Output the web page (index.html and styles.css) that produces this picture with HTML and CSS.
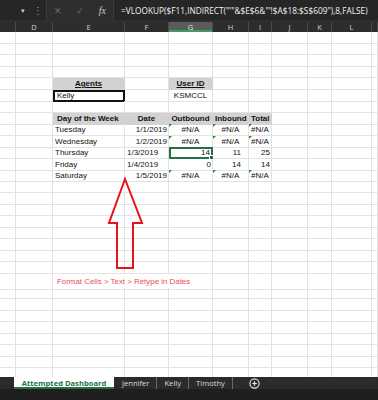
FILE: index.html
```html
<!DOCTYPE html>
<html lang="en">
<head>
    <meta charset="UTF-8">
    <meta name="viewport" content="width=device-width, initial-scale=1.0">
    <title>Attempted Dashboard</title>
    <link rel="stylesheet" href="styles.css">
</head>
<body>

<div class="app">
    <div class="fbar">
        <div class="namebox"><span class="caret">&#9662;</span></div>
        <div class="dots">&#8942;</div>
        <div class="fbtns">
            <span class="fbtn">&#10005;</span>
            <span class="fbtn">&#10003;</span>
            <span class="fbtn fx">fx</span>
        </div>
        <div class="formula">=VLOOKUP($F11,INDIRECT("'"&amp;$E$6&amp;"'!$A$18:$S$609"),8,FALSE)</div>
    </div>

    <div class="colheads">
        <div></div><div>D</div><div>E</div><div>F</div><div class="sel">G</div><div>H</div><div>I</div><div>J</div><div>K</div><div>L</div><div></div>
    </div>

    <div class="sheet">
        <div class="row"><div></div><div></div><div></div><div></div><div></div><div></div><div></div><div></div><div></div><div></div><div></div></div>
        <div class="row"><div></div><div></div><div></div><div></div><div></div><div></div><div></div><div></div><div></div><div></div><div></div></div>
        <div class="row"><div></div><div></div><div></div><div></div><div></div><div></div><div></div><div></div><div></div><div></div><div></div></div>
        <div class="row"><div></div><div></div><div></div><div></div><div></div><div></div><div></div><div></div><div></div><div></div><div></div></div>
        <div class="row"><div></div><div></div><div class="hd ul c">Agents</div><div></div><div class="hd ul c">User ID</div><div></div><div></div><div></div><div></div><div></div><div></div></div>
        <div class="row"><div></div><div></div><div class="agent">Kelly</div><div></div><div class="c">KSMCCL</div><div></div><div></div><div></div><div></div><div></div><div></div></div>
        <div class="row"><div></div><div></div><div></div><div></div><div></div><div></div><div></div><div></div><div></div><div></div><div></div></div>
        <div class="row"><div></div><div></div><div class="hd pl">Day of the Week</div><div class="hd c">Date</div><div class="hd c">Outbound</div><div class="hd c">Inbound</div><div class="hd c">Total</div><div></div><div></div><div></div><div></div></div>
        <div class="row"><div></div><div></div><div>Tuesday</div><div class="r">1/1/2019</div><div class="c err">#N/A</div><div class="c err">#N/A</div><div class="c err">#N/A</div><div></div><div></div><div></div><div></div></div>
        <div class="row"><div></div><div></div><div>Wednesday</div><div class="r">1/2/2019</div><div class="c err">#N/A</div><div class="c err">#N/A</div><div class="c err">#N/A</div><div></div><div></div><div></div><div></div></div>
        <div class="row"><div></div><div></div><div>Thursday</div><div>1/3/2019</div><div class="r active">14</div><div class="r num">11</div><div class="r">25</div><div></div><div></div><div></div><div></div></div>
        <div class="row"><div></div><div></div><div>Friday</div><div>1/4/2019</div><div class="r">0</div><div class="r num">14</div><div class="r">14</div><div></div><div></div><div></div><div></div></div>
        <div class="row"><div></div><div></div><div>Saturday</div><div class="r">1/5/2019</div><div class="c err">#N/A</div><div class="c err">#N/A</div><div class="c err">#N/A</div><div></div><div></div><div></div><div></div></div>
        <div class="row"><div></div><div></div><div></div><div></div><div></div><div></div><div></div><div></div><div></div><div></div><div></div></div>
        <div class="row"><div></div><div></div><div></div><div></div><div></div><div></div><div></div><div></div><div></div><div></div><div></div></div>
        <div class="row"><div></div><div></div><div></div><div></div><div></div><div></div><div></div><div></div><div></div><div></div><div></div></div>
        <div class="row"><div></div><div></div><div></div><div></div><div></div><div></div><div></div><div></div><div></div><div></div><div></div></div>
        <div class="row"><div></div><div></div><div></div><div></div><div></div><div></div><div></div><div></div><div></div><div></div><div></div></div>
        <div class="row"><div></div><div></div><div></div><div></div><div></div><div></div><div></div><div></div><div></div><div></div><div></div></div>
        <div class="row"><div></div><div></div><div></div><div></div><div></div><div></div><div></div><div></div><div></div><div></div><div></div></div>
        <div class="row"><div></div><div></div><div></div><div></div><div></div><div></div><div></div><div></div><div></div><div></div><div></div></div>
        <div class="row tall"><div></div><div></div><div class="note">Format Cells &gt; Text &gt; Retype in Dates</div><div></div><div></div><div></div><div></div><div></div><div></div></div>
        <div class="row"><div></div><div></div><div></div><div></div><div></div><div></div><div></div><div></div><div></div><div></div><div></div></div>
        <div class="row"><div></div><div></div><div></div><div></div><div></div><div></div><div></div><div></div><div></div><div></div><div></div></div>
        <div class="row"><div></div><div></div><div></div><div></div><div></div><div></div><div></div><div></div><div></div><div></div><div></div></div>
        <div class="row"><div></div><div></div><div></div><div></div><div></div><div></div><div></div><div></div><div></div><div></div><div></div></div>
        <div class="row"><div></div><div></div><div></div><div></div><div></div><div></div><div></div><div></div><div></div><div></div><div></div></div>
        <div class="row"><div></div><div></div><div></div><div></div><div></div><div></div><div></div><div></div><div></div><div></div><div></div></div>
        <div class="row"><div></div><div></div><div></div><div></div><div></div><div></div><div></div><div></div><div></div><div></div><div></div></div>
        <div class="row"><div></div><div></div><div></div><div></div><div></div><div></div><div></div><div></div><div></div><div></div><div></div></div>
    </div>

    <div class="tabs">
        <div class="tab active">Attempted Dashboard</div>
        <div class="tab">Jennifer</div>
        <div class="tab">Kelly</div>
        <div class="tab">Timothy</div>
        <div class="addtab">
            <svg width="11" height="11" viewBox="0 0 11 11">
                <circle cx="5.5" cy="5.5" r="4.6" fill="none" stroke="#e6e6e6" stroke-width="1.1"/>
                <path d="M5.5 3.2v4.6M3.2 5.5h4.6" stroke="#e6e6e6" stroke-width="1.2"/>
            </svg>
        </div>
    </div>
    <div class="status"></div>

    <svg class="arrow" width="378" height="400" viewBox="0 0 378 400">
        <polygon points="125,179 109,223 117,223 117,268 133,268 133,223 142,223" fill="none" stroke="#e5121c" stroke-width="2" stroke-linejoin="miter"/>
    </svg>
</div>

</body>
</html>
```

FILE: styles.css
```css
body {
    margin: 0;
    background-color: #2b2b2b;
    font-family: "Liberation Sans", Arial, sans-serif;
}
.app {
    position: relative;
    width: 378px;
    height: 400px;
    overflow: hidden;
}
.fbar {
    height: 20px;
    display: flex;
    align-items: center;
    background-color: #262626;
    border-bottom: 2px solid #2f2f2f;
    color: #d8d8d8;
    font-family: "Open Sans", sans-serif;
}
.namebox {
    width: 30px;
    height: 100%;
    display: flex;
    justify-content: flex-end;
    align-items: center;
    padding-right: 5px;
    box-sizing: border-box;
}
.caret {
    font-size: 7px;
    color: #cfcfcf;
}
.dots {
    width: 16px;
    text-align: center;
    font-size: 10px;
    color: #9a9a9a;
}
.fbtns {
    width: 68px;
    height: 100%;
    display: flex;
    justify-content: space-around;
    align-items: center;
    background-color: #2e2e2e;
    border-left: 1px solid #3a3a3a;
    border-right: 1px solid #3a3a3a;
    box-sizing: border-box;
}
.fbtn {
    font-size: 9px;
    color: #6e6e6e;
}
.fbtn.fx {
    font-family: "Liberation Serif", serif;
    font-style: italic;
    font-size: 10px;
    color: #c9c9c9;
}
.formula {
    flex: 1;
    padding-left: 7px;
    font-size: 8.3px;
    color: #f2f2f2;
    white-space: nowrap;
    overflow: hidden;
}
.colheads, .row {
    display: grid;
    grid-template-columns: 16px 37px 72px 44px 44px 36px 23px 36px 24px 40px 6px;
}
.colheads {
    height: 10px;
    background-color: #2d2d2d;
}
.colheads div {
    border-right: 1px solid #4a4a4a;
    color: #cfcfcf;
    font-family: "Open Sans", sans-serif;
    font-size: 7.5px;
    line-height: 10px;
    text-align: center;
}
.colheads .sel {
    background-color: #5b5b5b;
    box-shadow: inset 0 -2px 0 #3c9e5c;
    color: #e0e0e0;
}
.sheet {
    height: 345px;
    background-color: #fff;
    overflow: hidden;
}
.row {
    height: 11.5px;
}
.row.tall {
    height: 14px;
}
.row div {
    position: relative;
    border-right: 1px solid #e2e2e2;
    border-bottom: 1px solid #e2e2e2;
    padding: 0 2px;
    font-size: 8px;
    line-height: 11px;
    color: #111;
    white-space: nowrap;
}
.row .c {
    text-align: center;
}
.row .r {
    text-align: right;
    padding-right: 1px;
}
.row .num {
    padding-right: 7px;
}
.row .pl {
    padding-left: 4px;
}
.row .hd {
    background-color: #d2d2d2;
    border-color: #d2d2d2;
    font-weight: bold;
}
.row .ul {
    text-decoration: underline;
}
.row .agent {
    border: 2px solid #111;
    line-height: 8px;
}
.row .active {
    border: 2px solid #217346;
    padding-right: 1px;
    line-height: 8px;
}
.row .active::after {
    content: "";
    position: absolute;
    right: -3px;
    bottom: -3px;
    width: 3px;
    height: 3px;
    background-color: #217346;
    border: 1px solid #fff;
}
.row .err::before {
    content: "";
    position: absolute;
    left: 0;
    top: 0;
    border-top: 3px solid #1e8a3c;
    border-right: 3px solid transparent;
}
.row .note {
    grid-column: span 3;
    padding-left: 4px;
    font-size: 7.9px;
    line-height: 15px;
    color: #ee4a5c;
}
.tabs {
    height: 12px;
    display: flex;
    align-items: center;
    padding-left: 14px;
    background-color: #2b2b2b;
    font-family: "Open Sans", sans-serif;
    font-size: 7.6px;
    color: #dcdcdc;
}
.tab {
    height: 100%;
    line-height: 12px;
    padding: 0 7px;
    border-right: 1px solid #6a6a6a;
    box-sizing: border-box;
}
.tab.active {
    width: 100px;
    padding: 0;
    text-align: center;
    background-color: #fff;
    color: #217346;
    font-weight: bold;
    border-right: none;
    box-shadow: inset 0 -2px 0 #217346;
    margin-right: 1px;
}
.addtab {
    display: flex;
    margin-left: 16px;
}
.status {
    height: 11px;
    background-color: #1f1f1f;
}
.arrow {
    position: absolute;
    left: 0;
    top: 0;
    pointer-events: none;
}
```
